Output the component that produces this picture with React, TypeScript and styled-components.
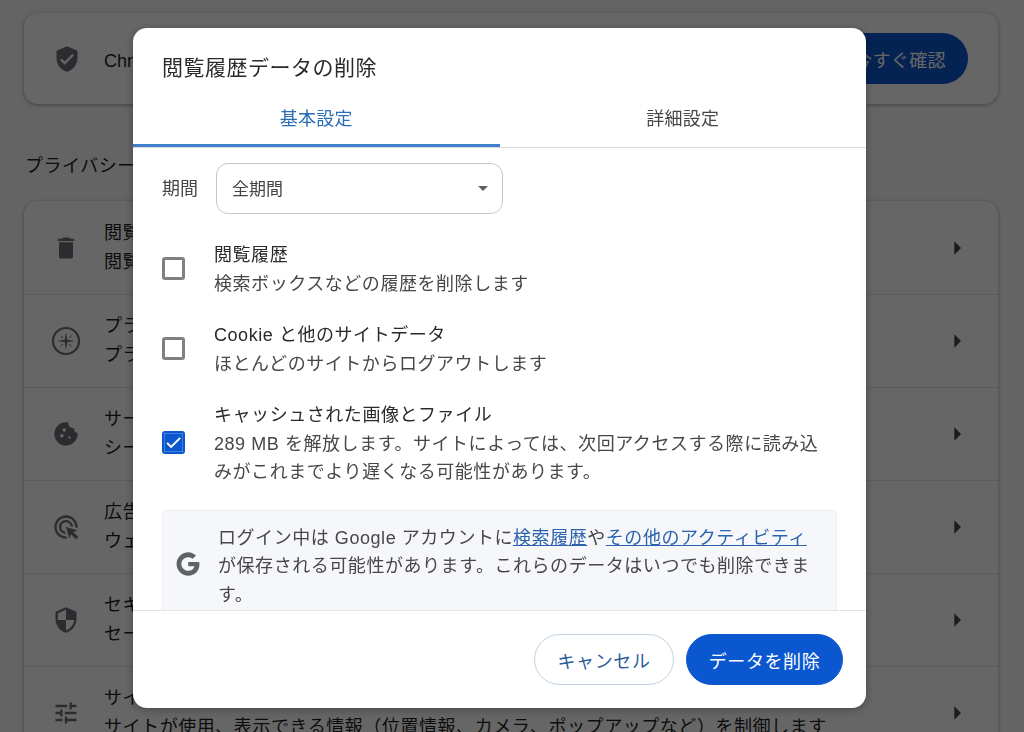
import React from "react";
import styled, { createGlobalStyle } from "styled-components";
import {
  MdArrowDropDown,
  MdArrowRight,
  MdCheck,
  MdCookie,
  MdDelete,
  MdOutlineAdsClick,
  MdSecurity,
  MdTune,
  MdVerifiedUser
} from "react-icons/md";

const GlobalStyle = createGlobalStyle`
  html, body {
    margin: 0;
    height: 100%;
    overflow: hidden;
    background: #fbfbfb;
    color: #1f1f1f;
    font-family: "Liberation Sans", "Noto Sans CJK JP", sans-serif;
  }
`;

const Page = styled.div`
  height: 732px;
  overflow: hidden;
  padding: 13px 26px 0 24px;
  box-sizing: border-box;
`;

const Card = styled.section`
  background: #ffffff;
  border-radius: 14px;
  box-shadow: 0 1px 4px rgba(0, 0, 0, 0.35);
`;

const SafetyCard = styled(Card)`
  height: 91px;
  display: flex;
  align-items: center;
  padding: 0 30px 0 27px;
  gap: 21px;
  font-size: 18px;
`;

const SafetyText = styled.span`
  flex: 1;
`;

const CheckNow = styled.span`
  background: #0b57d0;
  color: #ffffff;
  height: 51px;
  width: 190px;
  border-radius: 26px;
  display: flex;
  align-items: center;
  justify-content: flex-end;
  padding-right: 22px;
  box-sizing: border-box;
  letter-spacing: 0.4px;
`;

const SectionTitle = styled.h2`
  margin: 46px 0 21px 1px;
  padding-top: 3px;
  font-size: 18px;
  line-height: 27px;
  font-weight: 400;
  letter-spacing: 0.5px;
`;

const SettingRow = styled.div`
  height: 93px;
  box-sizing: border-box;
  display: flex;
  align-items: center;
  padding: 0 25px 0 26px;
  border-top: 1px solid #e3e3e3;

  &:first-child {
    border-top-color: transparent;
  }
`;

const IconSlot = styled.span`
  width: 32px;
  height: 32px;
  display: flex;
  align-items: center;
  justify-content: center;
  color: #6e6e78;
  font-size: 28px;
`;

const RowIcon = styled(IconSlot)`
  margin-right: 22px;
`;

const RowText = styled.div`
  flex: 1;
  font-size: 18px;
  line-height: 29px;
  letter-spacing: 0.55px;
  white-space: nowrap;
`;

const RowArrow = styled.span`
  display: flex;
  color: #474747;
  font-size: 32px;
`;

const Scrim = styled.div`
  position: fixed;
  inset: 0;
  background: rgba(0, 0, 0, 0.6);
`;

const Dialog = styled.div`
  position: absolute;
  left: 133px;
  top: 28px;
  width: 733px;
  height: 680px;
  background: #ffffff;
  border-radius: 14px;
  display: flex;
  flex-direction: column;
  overflow: hidden;
  box-shadow: 0 2px 10px rgba(0, 0, 0, 0.3);
`;

const Title = styled.h1`
  margin: 0;
  padding: 25px 29px 0;
  font-size: 21px;
  line-height: 30px;
  font-weight: 400;
  letter-spacing: 0.5px;
  color: #2a2a2a;
`;

const Tabs = styled.div`
  display: flex;
  height: 65px;
  box-sizing: border-box;
  border-bottom: 1px solid #dcdcdc;
`;

const Tab = styled.div<{ $active?: boolean }>`
  flex: 1;
  display: flex;
  align-items: center;
  justify-content: center;
  padding-top: 6px;
  box-sizing: border-box;
  font-size: 18px;
  letter-spacing: 0.3px;
  color: ${props => (props.$active ? "#2b6cb8" : "#474747")};
  border-bottom: 3px solid ${props => (props.$active ? "#3f7fce" : "transparent")};
`;

const Body = styled.div`
  flex: 1;
  overflow: hidden;
  padding: 15px 29px 0;
`;

const PeriodRow = styled.div`
  display: flex;
  align-items: center;
  gap: 18px;
  font-size: 18px;
  color: #474747;
  margin-bottom: 27px;
`;

const PeriodLabel = styled.span`
  margin-bottom: 3px;
`;

const Select = styled.div`
  width: 287px;
  height: 51px;
  box-sizing: border-box;
  border: 1px solid #c7c7c7;
  border-radius: 12px;
  display: flex;
  align-items: center;
  justify-content: space-between;
  padding: 0 7px 2px 15px;
  font-size: 17px;
  color: #444444;
`;

const Caret = styled.span`
  display: flex;
  font-size: 24px;
  color: #5f5f5f;
`;

const OptionRow = styled.div`
  display: flex;
  align-items: center;
  gap: 29px;
  margin-bottom: 23px;
`;

const Checkbox = styled.span<{ $checked?: boolean }>`
  width: 23px;
  height: 23px;
  flex: none;
  margin-top: -2px;
  box-sizing: border-box;
  border-radius: 3px;
  border: ${props => (props.$checked ? "none" : "3px solid #808080")};
  background: ${props => (props.$checked ? "#0b57d0" : "#ffffff")};
  color: #ffffff;
  display: flex;
  align-items: center;
  justify-content: center;
  font-size: 19px;

  svg {
    flex: none;
    stroke: currentColor;
    stroke-width: 0.6;
  }
`;

const OptionText = styled.div`
  font-size: 18px;
  line-height: 28.5px;
  letter-spacing: 0.55px;
  width: 612px;
  color: #2a2a2a;
`;

const OptionDetail = styled.div`
  color: #474747;
`;

const InfoBox = styled.div`
  display: flex;
  align-items: flex-start;
  background: #f6f7fa;
  border: 1px solid #eceef1;
  border-radius: 4px;
  padding: 13px 20px 0 11px;
  gap: 16px;
  margin-top: 23px;
  height: 130px;
  font-size: 18px;
  line-height: 28.5px;
  letter-spacing: 0.55px;
  color: #474747;
`;

const GoogleMark = styled.svg`
  width: 28px;
  height: 28px;
  flex: none;
  margin-top: 26px;
`;

const InfoLink = styled.span`
  color: #2b62ad;
  text-decoration: underline;
`;

const Footer = styled.footer`
  height: 98px;
  box-sizing: border-box;
  border-top: 1px solid #e3e3e3;
  display: flex;
  align-items: center;
  justify-content: flex-end;
  gap: 12px;
  padding: 0 23px 0 0;
`;

const Button = styled.button<{ $primary?: boolean }>`
  height: 51px;
  width: ${props => (props.$primary ? "157px" : "140px")};
  border-radius: 26px;
  box-sizing: border-box;
  font: inherit;
  font-size: 18px;
  letter-spacing: 0.6px;
  border: 1px solid ${props => (props.$primary ? "#0b57d0" : "#c2cfe2")};
  background: ${props => (props.$primary ? "#0b57d0" : "#ffffff")};
  color: ${props => (props.$primary ? "#ffffff" : "#2d5c9c")};
`;

const CompassIcon = () => (
  <svg width="30" height="30" viewBox="0 0 30 30" fill="none">
    <circle cx="15" cy="15" r="13" stroke="currentColor" strokeWidth="2.2" />
    <path
      d="M15 6l1.3 7.7L24 15l-7.7 1.3L15 24l-1.3-7.7L6 15l7.7-1.3z"
      fill="currentColor"
    />
    <path
      d="M9.5 9.5l2.4 2.4M20.5 9.5l-2.4 2.4M9.5 20.5l2.4-2.4M20.5 20.5l-2.4-2.4"
      stroke="currentColor"
    />
  </svg>
);

const settings = [
  {
    icon: <MdDelete />,
    title: "閲覧履歴データの削除",
    detail: "閲覧履歴、Cookie、キャッシュなどを削除します"
  },
  {
    icon: <CompassIcon />,
    title: "プライバシー ガイド",
    detail: "プライバシーとセキュリティの主要な設定を確認します"
  },
  {
    icon: <MdCookie />,
    title: "サードパーティ Cookie",
    detail: "シークレット モードではサードパーティ Cookie がブロックされています"
  },
  {
    icon: <MdOutlineAdsClick />,
    title: "広告プライバシー",
    detail: "ウェブサイトに広告を表示するために使用される情報をカスタマイズします"
  },
  {
    icon: <MdSecurity />,
    title: "セキュリティ",
    detail: "セーフ ブラウジングなどのセキュリティ設定"
  },
  {
    icon: <MdTune />,
    title: "サイトの設定",
    detail: "サイトが使用、表示できる情報（位置情報、カメラ、ポップアップなど）を制御します"
  }
];

const App = () => (
  <>
    <GlobalStyle />
    <Page>
      <SafetyCard>
        <IconSlot>
          <MdVerifiedUser />
        </IconSlot>
        <SafetyText>Chrome の安全性を確認</SafetyText>
        <CheckNow>今すぐ確認</CheckNow>
      </SafetyCard>
      <SectionTitle>プライバシーとセキュリティ</SectionTitle>
      <Card>
        {settings.map(item => (
          <SettingRow key={item.title}>
            <RowIcon>{item.icon}</RowIcon>
            <RowText>
              <div>{item.title}</div>
              <div>{item.detail}</div>
            </RowText>
            <RowArrow>
              <MdArrowRight />
            </RowArrow>
          </SettingRow>
        ))}
      </Card>
    </Page>
    <Scrim>
      <Dialog>
        <Title>閲覧履歴データの削除</Title>
        <Tabs>
          <Tab $active>基本設定</Tab>
          <Tab>詳細設定</Tab>
        </Tabs>
        <Body>
          <PeriodRow>
            <PeriodLabel>期間</PeriodLabel>
            <Select>
              全期間
              <Caret>
                <MdArrowDropDown />
              </Caret>
            </Select>
          </PeriodRow>
          <OptionRow>
            <Checkbox />
            <OptionText>
              閲覧履歴
              <OptionDetail>検索ボックスなどの履歴を削除します</OptionDetail>
            </OptionText>
          </OptionRow>
          <OptionRow>
            <Checkbox />
            <OptionText>
              Cookie と他のサイトデータ
              <OptionDetail>ほとんどのサイトからログアウトします</OptionDetail>
            </OptionText>
          </OptionRow>
          <OptionRow>
            <Checkbox $checked>
              <MdCheck />
            </Checkbox>
            <OptionText>
              キャッシュされた画像とファイル
              <OptionDetail>
                289 MB を解放します。サイトによっては、次回アクセスする際に読み込みがこれまでより遅くなる可能性があります。
              </OptionDetail>
            </OptionText>
          </OptionRow>
          <InfoBox>
            <GoogleMark viewBox="0 0 24 24">
              <path
                fill="#5f6368"
                d="M12.2 10.2v3.7h5.4c-.5 2.3-2.5 3.9-5.4 3.9-3.3 0-5.9-2.6-5.9-5.8s2.6-5.8 5.9-5.8c1.5 0 2.8.5 3.8 1.4l2.8-2.8C17 3.1 14.8 2 12.2 2 6.7 2 2.2 6.5 2.2 12s4.5 10 10 10c5.8 0 9.6-4.1 9.6-9.8 0-.7-.1-1.4-.2-2z"
              />
            </GoogleMark>
            <div>
              ログイン中は Google アカウントに<InfoLink>検索履歴</InfoLink>や
              <InfoLink>その他のアクティビティ</InfoLink>
              が保存される可能性があります。これらのデータはいつでも削除できます。
            </div>
          </InfoBox>
        </Body>
        <Footer>
          <Button>キャンセル</Button>
          <Button $primary>データを削除</Button>
        </Footer>
      </Dialog>
    </Scrim>
  </>
);

export default App;
